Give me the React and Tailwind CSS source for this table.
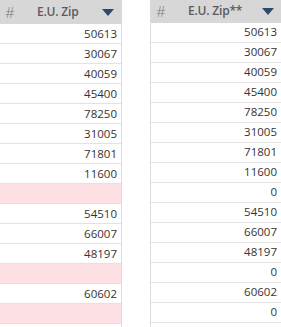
const left = ['50613', '30067', '40059', '45400', '78250', '31005', '71801', '11600', null, '54510', '66007', '48197', null, '60602', null];
const right = ['50613', '30067', '40059', '45400', '78250', '31005', '71801', '11600', '0', '54510', '66007', '48197', '0', '60602', '0', ''];

function Arrow() {
  return (
    <svg width="12" height="7" viewBox="0 0 12 7" className="shrink-0">
      <path d="M0 0h12L6 7z" fill="#2e4a6b" />
    </svg>
  );
}

function Column({ title, rows, className }) {
  return (
    <div className={`flex flex-col ${className}`}>
      <div className="flex h-[24px] items-center bg-[#d7d7d7] pl-[5px] pr-[7px]">
        <span className="w-[32px] text-[15px] font-light text-[#7a7a7a]">#</span>
        <span className="flex-1 text-[12px] font-semibold tracking-[-0.2px] text-[#5b5b5b]">{title}</span>
        <Arrow />
      </div>
      {rows.map((v, i) => (
        <div
          key={i}
          className={`flex h-[20px] shrink-0 items-center justify-end border-b border-[#e2e2e2] pr-[4px] text-[11.5px] text-[#333] ${
            v === null ? 'bg-[#fde0e4]' : 'bg-white'
          }`}
        >
          {v}
        </div>
      ))}
    </div>
  );
}

export default function App() {
  return (
    <div
      className="flex h-[327px] w-[281px] overflow-hidden bg-white"
      style={{ fontFamily: '"Open Sans", "Noto Sans", sans-serif' }}
    >
      <Column title="E.U. Zip" rows={left} className="w-[122px] border-r border-[#dcdcdc]" />
      <div className="w-[28px]" />
      <Column title="E.U. Zip**" rows={right} className="w-[131px] border-l border-[#dcdcdc]" />
    </div>
  );
}
